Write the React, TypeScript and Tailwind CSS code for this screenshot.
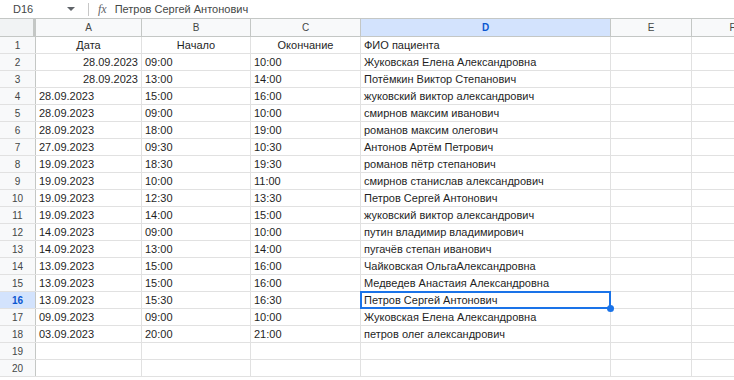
const rows: [string, string, string, string, boolean?][] = [
  ['28.09.2023', '09:00', '10:00', 'Жуковская Елена Александровна', true],
  ['28.09.2023', '13:00', '14:00', 'Потёмкин Виктор Степанович', true],
  ['28.09.2023', '15:00', '16:00', 'жуковский виктор александрович'],
  ['28.09.2023', '09:00', '10:00', 'смирнов максим иванович'],
  ['28.09.2023', '18:00', '19:00', 'романов максим олегович'],
  ['27.09.2023', '09:30', '10:30', 'Антонов Артём Петрович'],
  ['19.09.2023', '18:30', '19:30', 'романов пётр степанович'],
  ['19.09.2023', '10:00', '11:00', 'смирнов станислав александрович'],
  ['19.09.2023', '12:30', '13:30', 'Петров Сергей Антонович'],
  ['19.09.2023', '14:00', '15:00', 'жуковский виктор александрович'],
  ['14.09.2023', '09:00', '10:00', 'путин владимир владимирович'],
  ['14.09.2023', '13:00', '14:00', 'пугачёв степан иванович'],
  ['13.09.2023', '15:00', '16:00', 'Чайковская ОльгаАлександровна'],
  ['13.09.2023', '15:00', '16:00', 'Медведев Анастаия Александровна'],
  ['13.09.2023', '15:30', '16:30', 'Петров Сергей Антонович'],
  ['09.09.2023', '09:00', '10:00', 'Жуковская Елена Александровна'],
  ['03.09.2023', '20:00', '21:00', 'петров олег александрович'],
];

const cols = ['A', 'B', 'C', 'D', 'E', 'F'];
const widths = ['w-[106px]', 'w-[109px]', 'w-[110px]', 'w-[250px]', 'w-[81px]', 'w-[82px]'];

function Cell({ w, children, className = 'overflow-hidden' }: { w: string; children?: React.ReactNode; className?: string }) {
  return (
    <div className={`${w} shrink-0 h-full border-r border-[#e1e1e1] px-[3px] flex items-center whitespace-nowrap ${className}`}>
      {children}
    </div>
  );
}

export default function App() {
  const all: (string | undefined)[][] = [
    ['Дата', 'Начало', 'Окончание', 'ФИО пациента'],
    ...rows.map((r) => [r[0], r[1], r[2], r[3]]),
    [],
    [],
  ];

  return (
    <div className="w-[734px] h-[380px] overflow-hidden bg-white text-[11px] text-[#1f1f1f]" style={{ fontFamily: '"Liberation Sans", Arial, sans-serif' }}>
      {/* formula bar */}
      <div className="h-[18px] flex items-center text-[#444746]">
        <div className="w-[64px] pl-[13px]">D16</div>
        <svg width="8" height="4" viewBox="0 0 8 4" className="ml-[3px]"><path d="M0 0h8L4 4z" fill="#5f6368" /></svg>
        <div className="ml-[13px] w-px h-[13px] bg-[#c7c7c7]" />
        <span className="ml-[9px] italic text-[#5f6368] text-[12px]" style={{ fontFamily: '"Liberation Serif", serif' }}>fx</span>
        <span className="ml-[8px]">Петров Сергей Антонович</span>
      </div>

      {/* column header */}
      <div className="h-[19px] flex border-t border-b border-[#c4c7c5] bg-[#f8f9fa] text-[10px] text-[#444746]">
        <div className="w-[36px] shrink-0 h-full border-r-[3px] border-[#c4c7c5] bg-[#f1f3f4]" />
        {cols.map((c, i) => (
          <div
            key={c}
            className={`${widths[i]} shrink-0 h-full border-r border-[#c4c7c5] flex items-center justify-center ${c === 'D' ? 'bg-[#d3e3fd] text-[#0b57d0] font-bold' : ''}`}
          >
            {c}
          </div>
        ))}
      </div>

      {all.map((r, idx) => {
        const n = idx + 1;
        const sel = n === 16;
        const right = idx > 0 && rows[idx - 1]?.[4];
        const center = idx === 0;
        return (
          <div key={n} className={`h-[17px] flex border-b border-[#e1e1e1] ${sel ? 'relative z-10' : ''}`}>
            <div
              className={`w-[36px] shrink-0 h-full border-r border-[#c4c7c5] flex items-center justify-center text-[10px] ${sel ? 'bg-[#d3e3fd] text-[#0b57d0] font-bold' : 'bg-[#f8f9fa] text-[#444746]'}`}
            >
              {n}
            </div>
            <Cell w={widths[0]} className={`overflow-hidden ${right ? 'justify-end' : center ? 'justify-center' : ''}`}>{r[0]}</Cell>
            <Cell w={widths[1]} className={`overflow-hidden ${center ? 'justify-center' : ''}`}>{r[1]}</Cell>
            <Cell w={widths[2]} className={`overflow-hidden ${center ? 'justify-center' : ''}`}>{r[2]}</Cell>
            <Cell w={widths[3]} className="relative">
              {r[3]}
              {sel && (
                <>
                  <div className="absolute -left-px -top-px -right-px -bottom-px border-2 border-[#1a73e8] pointer-events-none" />
                  <div className="absolute -right-[4px] -bottom-[4px] w-[7px] h-[7px] rounded-full bg-[#1a73e8]" />
                </>
              )}
            </Cell>
            <Cell w={widths[4]} />
            <Cell w={widths[5]} />
          </div>
        );
      })}
    </div>
  );
}
